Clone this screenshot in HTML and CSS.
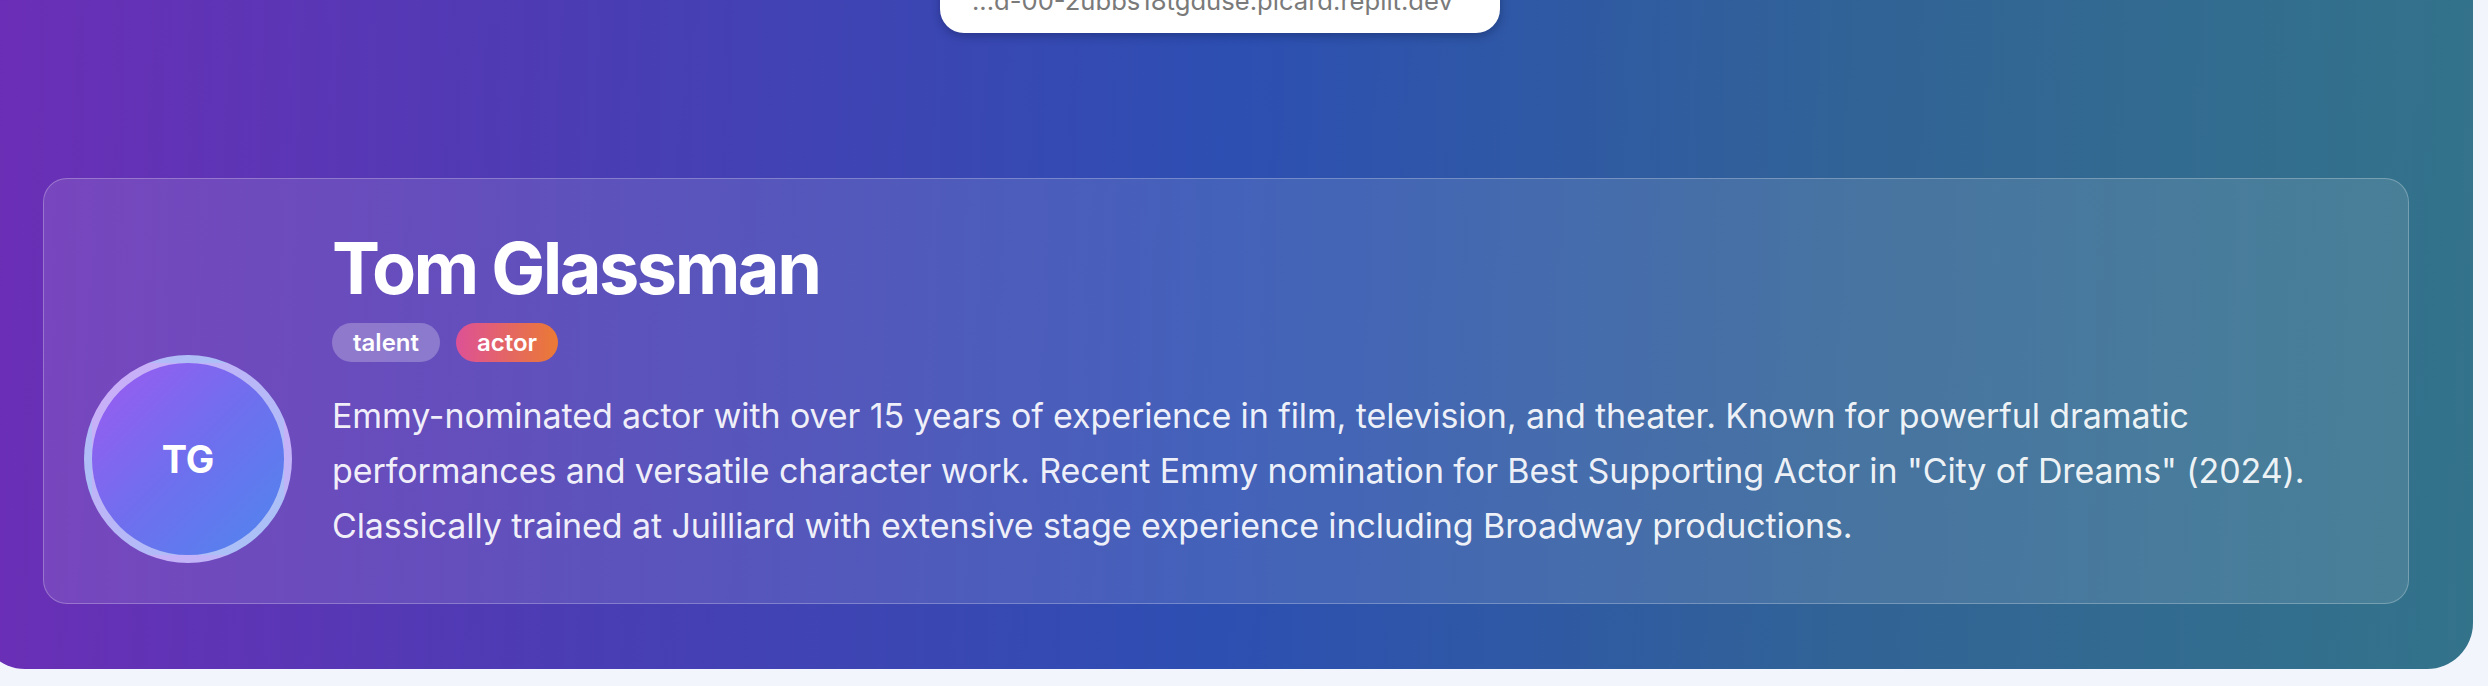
FILE: index.html
```html
<!DOCTYPE html>
<html lang="en">
<head>
<meta charset="utf-8">
<title>Tom Glassman</title>
<link rel="stylesheet" href="styles.css">
</head>
<body>
<section class="hero">
  <div class="url-pop"><span class="url-text">...d-00-2ubbs18tgduse.picard.replit.dev</span></div>
  <div class="card">
    <div class="avatar"><span>TG</span></div>
    <div class="info">
      <h1 class="name">Tom Glassman</h1>
      <div class="tags">
        <span class="tag tag-talent">talent</span>
        <span class="tag tag-actor">actor</span>
      </div>
      <p class="bio">Emmy-nominated actor with over 15 years of experience in film, television, and theater. Known for powerful dramatic performances and versatile character work. Recent Emmy nomination for Best Supporting Actor in "City of Dreams" (2024). Classically trained at Juilliard with extensive stage experience including Broadway productions.</p>
    </div>
  </div>
</section>
</body>
</html>
```
FILE: styles.css
```css
html, body {
  margin: 0;
  padding: 0;
}
body {
  background: #f2f5fc;
  font-family: Inter, "Noto Sans", "Liberation Sans", sans-serif;
  overflow: hidden;
  width: 2488px;
  height: 686px;
}
.hero {
  position: relative;
  box-sizing: border-box;
  margin-left: -21px;
  width: 2494px;
  height: 669px;
  padding: 178px 64px 0;
  border-radius: 0 0 46px 46px;
  background: linear-gradient(92deg, #6c2eb6 0%, #4a3db4 25%, #2d4fb2 50%, #316396 75%, #33738a 100%);
}
.url-pop {
  position: absolute;
  top: -40px;
  left: 961px;
  width: 560px;
  height: 73px;
  box-sizing: border-box;
  padding: 28px 0 0 32px;
  background: #fff;
  border-radius: 24px;
  box-shadow: 0 3px 10px rgba(10, 20, 60, 0.35);
}
.url-text {
  display: block;
  font-size: 25.6px;
  line-height: 25px;
  color: #7a7a7a;
  white-space: nowrap;
}
.card {
  box-sizing: border-box;
  height: 426px;
  display: flex;
  gap: 40px;
  padding: 40px;
  border: 1px solid rgba(255, 255, 255, 0.25);
  border-radius: 24px;
  background: rgba(255, 255, 255, 0.11);
}
.avatar {
  flex: none;
  align-self: flex-end;
  box-sizing: border-box;
  width: 208px;
  height: 208px;
  border-radius: 50%;
  border: 8px solid rgba(255, 255, 255, 0.5);
  background: linear-gradient(135deg, #9d5af2 0%, #6f6fee 50%, #4f86ee 100%);
  display: flex;
  align-items: center;
  justify-content: center;
  color: #fff;
  font-weight: 700;
  font-size: 38px;
}
.info {
  flex: 1;
  min-width: 0;
}
.name {
  margin: 6px 0 0;
  font-size: 72px;
  line-height: 1.2;
  font-weight: 700;
  letter-spacing: -0.035em;
  color: #fff;
}
.tags {
  display: flex;
  gap: 16px;
  margin-top: 12px;
}
.tag {
  height: 39px;
  display: flex;
  align-items: center;
  padding: 0 21px;
  border-radius: 20px;
  font-size: 24px;
  font-weight: 600;
  color: #fff;
}
.tag-talent {
  background: rgba(255, 255, 255, 0.25);
}
.tag-actor {
  background: linear-gradient(90deg, #dd5196, #eb7a34);
}
.bio {
  margin: 26px 0 0;
  font-size: 34px;
  line-height: 55px;
  letter-spacing: -0.1px;
  color: rgba(255, 255, 255, 0.92);
}
```
